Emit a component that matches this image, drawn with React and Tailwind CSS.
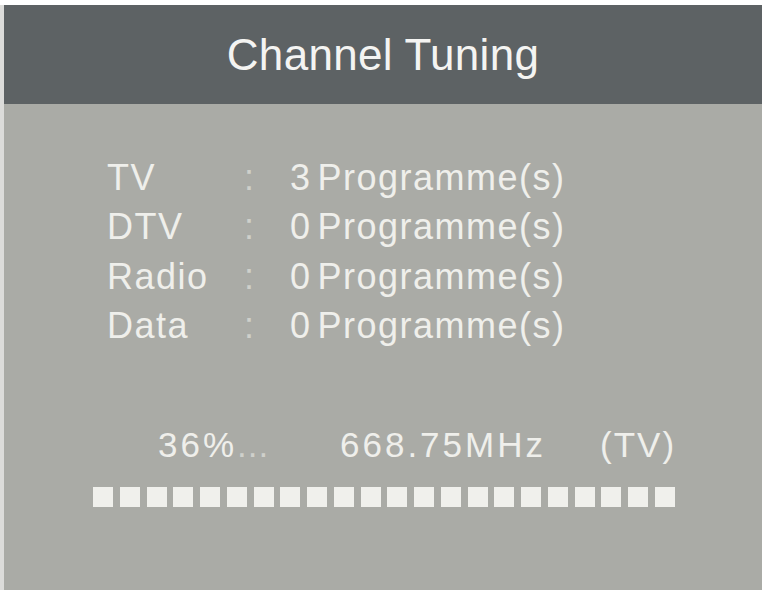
import React from "react";

const rows = [
  { label: "TV", count: 3 },
  { label: "DTV", count: 0 },
  { label: "Radio", count: 0 },
  { label: "Data", count: 0 },
];

export default function App() {
  const squares = Array.from({ length: 22 });

  return (
    <div
      className="w-[762px] h-[590px] overflow-hidden bg-white pt-[5px] flex"
      style={{ fontFamily: '"Liberation Sans", Arial, sans-serif' }}
    >
      <div className="w-[4px] bg-[#dcdcda]" />
      <div className="flex-1 flex flex-col bg-[#aaaba6]">
        <div className="h-[99px] bg-[#5d6264] flex items-center justify-center">
          <h1 className="text-[44px] leading-none text-[#f4f4f2] tracking-[0.3px]">
            Channel Tuning
          </h1>
        </div>

        <div className="pt-[49px] pl-[103px] text-[#efefeb] text-[36px] tracking-[1.5px]">
          {rows.map((row) => (
            <div key={row.label} className="flex h-[49.5px] items-center">
              <span className="w-[137px]">{row.label}</span>
              <span className="w-[46px] text-[#cfd0cb]">:</span>
              <span>
                {row.count}
                <span className="ml-[6px]">Programme(s)</span>
              </span>
            </div>
          ))}
        </div>

        <div className="mt-[69px] pl-[154px] flex h-[50px] items-center text-[35px] tracking-[3px] text-[#efefeb]">
          <span className="w-[182px]">
            36%<span className="text-[#cfd0cb] tracking-[1px]">...</span>
          </span>
          <span className="w-[260px]">668.75MHz</span>
          <span className="tracking-[2px]">(TV)</span>
        </div>

        <div className="mt-[17px] pl-[89px] flex gap-[6.75px]">
          {squares.map((_, i) => (
            <div key={i} className="w-[20px] h-[20px] bg-[#f0f0ec]" />
          ))}
        </div>
      </div>
    </div>
  );
}
